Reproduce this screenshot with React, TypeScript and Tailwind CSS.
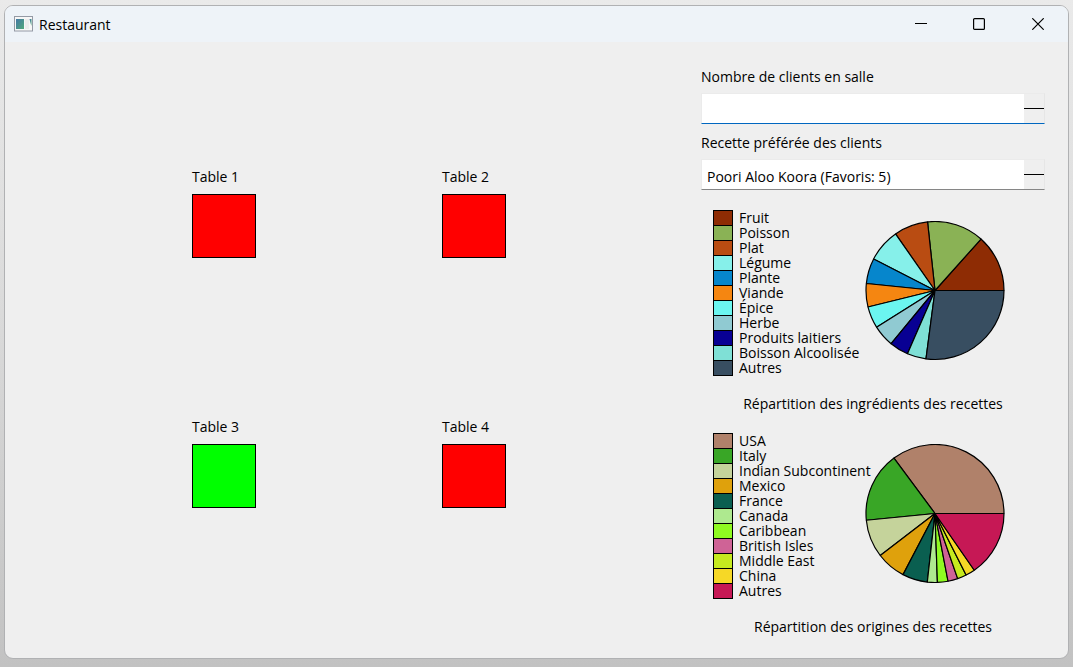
import React from 'react';

type Slice = { label: string; color: string; end: number };

// `end` is the counter-clockwise angle, in degrees, at which the slice stops.
const ingredients: Slice[] = [
  { label: 'Fruit', color: '#8e2c04', end: 48.2 },
  { label: 'Poisson', color: '#8ab255', end: 96.2 },
  { label: 'Plat', color: '#b94c12', end: 124.9 },
  { label: 'Légume', color: '#86f0ea', end: 152.8 },
  { label: 'Plante', color: '#0686cc', end: 174.2 },
  { label: 'Viande', color: '#f58611', end: 193.8 },
  { label: 'Épice', color: '#6bf6f0', end: 212.1 },
  { label: 'Herbe', color: '#90cad2', end: 230.5 },
  { label: 'Produits laitiers', color: '#080093', end: 246.5 },
  { label: 'Boisson Alcoolisée', color: '#7fe0d6', end: 262.5 },
  { label: 'Autres', color: '#384e61', end: 360 },
];

const origins: Slice[] = [
  { label: 'USA', color: '#b0816a', end: 126.5 },
  { label: 'Italy', color: '#39a626', end: 185.6 },
  { label: 'Indian Subcontinent', color: '#c5d39b', end: 217.5 },
  { label: 'Mexico', color: '#dfa10c', end: 242.4 },
  { label: 'France', color: '#0a5f50', end: 263.6 },
  { label: 'Canada', color: '#aee98f', end: 272 },
  { label: 'Caribbean', color: '#8ffa21', end: 280.9 },
  { label: 'British Isles', color: '#cf6396', end: 289.2 },
  { label: 'Middle East', color: '#c6ea1f', end: 296.8 },
  { label: 'China', color: '#f6d826', end: 304.7 },
  { label: 'Autres', color: '#c61855', end: 360 },
];

const tables = [
  { name: 'Table 1', free: false },
  { name: 'Table 2', free: false },
  { name: 'Table 3', free: true },
  { name: 'Table 4', free: false },
];

const RADIUS = 69;

function point(angle: number) {
  const a = (angle * Math.PI) / 180;
  return `${70 + RADIUS * Math.cos(a)} ${69.5 - RADIUS * Math.sin(a)}`;
}

function Pie({ slices, title }: { slices: Slice[]; title: string }) {
  return (
    <svg viewBox="0 0 140 140" className="h-[140px] w-[140px] shrink-0" role="img" aria-label={title}>
      {slices.map((s, i) => {
        const start = i === 0 ? 0 : slices[i - 1].end;
        const large = s.end - start > 180 ? 1 : 0;
        return (
          <path
            key={s.label}
            d={`M70 69.5 L${point(start)} A${RADIUS} ${RADIUS} 0 ${large} 0 ${point(s.end)} Z`}
            fill={s.color}
            stroke="#000"
            strokeWidth="1.2"
            strokeLinejoin="bevel"
          />
        );
      })}
    </svg>
  );
}

function Chart({ slices, title }: { slices: Slice[]; title: string }) {
  return (
    <figure>
      <div className="flex items-start pl-3">
        <ul className="w-[152px] shrink-0">
          {slices.map((s) => (
            <li key={s.label} className="flex h-[15px] items-start gap-[6px] leading-[15px] whitespace-nowrap">
              <span className="h-4 w-5 shrink-0 border border-black" style={{ backgroundColor: s.color }} />
              {s.label}
            </li>
          ))}
        </ul>
        <div className="pt-[11px]">
          <Pie slices={slices} title={title} />
        </div>
      </div>
      <figcaption className="pt-[19px] text-center leading-5">{title}</figcaption>
    </figure>
  );
}

function Combo({ id, label, options, active }: { id: string; label: string; options: string[]; active?: boolean }) {
  return (
    <div className="flex flex-col gap-[6px]">
      <label htmlFor={id} className="leading-5">
        {label}
      </label>
      <div
        className={`flex h-[31px] border border-t-[#ebebeb] border-r-[#e6e6e6] border-l-[#ebebeb] ${
          active ? 'border-b-[#0067c0]' : 'border-b-[#868686]'
        }`}
      >
        <select id={id} className="min-w-0 flex-1 appearance-none bg-white pt-[3px] pl-[5px] outline-none">
          {options.map((o) => (
            <option key={o}>{o}</option>
          ))}
        </select>
        <span className="flex w-5 items-center">
          <span className="h-px w-full bg-black" />
        </span>
      </div>
    </div>
  );
}

export default function App() {
  return (
    <div className="flex min-h-screen bg-linear-to-b from-[#eaeaea] via-[#d9d9d9] to-[#c2c2c2] pt-[5px] pr-1 pb-2 pl-1 font-['Open_Sans','Noto_Sans',sans-serif] text-[14px] text-black">
      <div className="flex flex-1 flex-col overflow-hidden rounded-[9px] border border-[#b0b1b3] bg-[#efefef]">
        <header className="flex h-9 shrink-0 items-center bg-[#eef3f8] pl-[9px]">
          <svg viewBox="0 0 19 16" className="h-4 w-[19px]" aria-hidden="true">
            <defs>
              <linearGradient id="pane" x1="0" y1="0" x2="1" y2="1">
                <stop offset="0" stopColor="#4479a5" />
                <stop offset="1" stopColor="#53a97b" />
              </linearGradient>
            </defs>
            <rect x="0.5" y="0.5" width="18" height="14.5" fill="#f7f7f7" stroke="#949aa5" />
            <rect x="2" y="3" width="8" height="10" fill="url(#pane)" />
            <rect x="11" y="3" width="4" height="10" fill="#ececec" />
            <path d="M15.500 3h2v7l-1-3z" fill="url(#pane)" />
          </svg>
          <h1 className="pl-[6px]">Restaurant</h1>
          <div className="ml-auto flex h-full">
            <button aria-label="Réduire" className="flex w-[58px] items-center justify-center">
              <svg viewBox="0 0 12 12" className="h-3 w-3">
                <path d="M0 5.500h12" stroke="#000" />
              </svg>
            </button>
            <button aria-label="Agrandir" className="flex w-[58px] items-center justify-center">
              <svg viewBox="0 0 12 12" className="h-3 w-3" fill="none">
                <rect x="0.600" y="0.600" width="10.800" height="10.800" rx="1" stroke="#000" strokeWidth="1.200" />
              </svg>
            </button>
            <button aria-label="Fermer" className="flex w-[60px] items-center justify-center">
              <svg viewBox="0 0 12 12" className="h-3 w-3" fill="none">
                <path d="M0.300 0.300l11.400 11.400M11.700 0.300l-11.400 11.400" stroke="#000" strokeWidth="1.200" />
              </svg>
            </button>
          </div>
        </header>

        <main className="flex flex-1">
          <section aria-label="Salle" className="flex flex-1 items-center justify-center">
            <div className="grid grid-cols-[250px_250px] grid-rows-[250px_250px]">
              {tables.map((t) => (
                <div key={t.name} className="flex flex-col items-center justify-center pb-[25px]">
                  <div className="flex flex-col gap-[7px]">
                    <span className="leading-5">{t.name}</span>
                    <div className={`h-16 w-16 border border-black ${t.free ? 'bg-[#00ff00]' : 'bg-[#ff0000]'}`} />
                  </div>
                </div>
              ))}
            </div>
          </section>

          <aside className="mr-[23px] ml-2 flex w-[344px] flex-col pt-[25px]">
            <div className="flex flex-col gap-[9px]">
              <Combo id="clients" label="Nombre de clients en salle" options={['']} active />
              <Combo id="recette" label="Recette préférée des clients" options={['Poori Aloo Koora (Favoris: 5)']} />
            </div>
            <div className="flex flex-col gap-[19px] pt-5">
              <Chart slices={ingredients} title="Répartition des ingrédients des recettes" />
              <Chart slices={origins} title="Répartition des origines des recettes" />
            </div>
          </aside>
        </main>
      </div>
    </div>
  );
}
